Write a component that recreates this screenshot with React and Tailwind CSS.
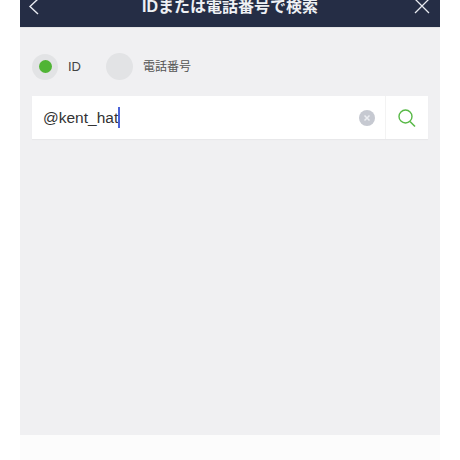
import React from 'react';

function App() {
  return (
    <div className="w-[460px] h-[460px] bg-white overflow-hidden px-[20px] font-['Liberation_Sans','Noto_Sans_CJK_JP',sans-serif]">
      <div className="w-[420px] h-[460px] flex flex-col">

        {/* Header */}
        <div className="h-[27px] shrink-0 bg-[#252d45] flex items-end justify-between pb-[11px] relative overflow-hidden">
          <svg width="14" height="18" viewBox="0 0 14 18" fill="none" className="ml-[7px]">
            <path d="M11 1 L3 8.5 L11 16" stroke="#e8eaf0" strokeWidth="1.4" />
          </svg>
          <p className="absolute left-0 right-0 top-[-3px] text-center text-[16px] leading-[20px] font-bold text-[#eef0f4]">IDまたは電話番号で検索</p>
          <svg width="18" height="18" viewBox="0 0 18 18" fill="none" className="mr-[9px] mb-[1px]">
            <path d="M2 2 L16 16 M16 2 L2 16" stroke="#e8eaf0" strokeWidth="1.3" />
          </svg>
        </div>

        {/* Body */}
        <div className="h-[408px] shrink-0 bg-[#f0f0f2] border-t border-[#e4e4e6] px-[12px] pt-[25px]">

          {/* Radio options */}
          <div className="flex items-center h-[27px]">
            <div className="w-[26px] h-[26px] rounded-full bg-[#e2e3e5] flex items-center justify-center">
              <div className="w-[13px] h-[13px] rounded-full bg-[#50b435]" />
            </div>
            <span className="ml-[10px] text-[13px] text-[#444]">ID</span>
            <div className="ml-[25px] w-[27px] h-[27px] rounded-full bg-[#e2e3e5]" />
            <span className="ml-[10px] text-[12px] text-[#555]">電話番号</span>
          </div>

          {/* Search field */}
          <div className="mt-[16px] h-[43px] bg-white flex items-center shadow-[0_1px_1px_rgba(0,0,0,0.03)]">
            <div className="flex-1 pl-[11px] flex items-center">
              <span className="text-[15.5px] text-[#333]">@kent_hat</span>
              <div className="w-[2px] h-[21px] bg-[#4a63d8]" />
            </div>
            <svg width="16" height="16" viewBox="0 0 16 16" className="mr-[10px]">
              <circle cx="8" cy="8" r="8" fill="#c6c9d1" />
              <path d="M5.5 5.5 L10.5 10.5 M10.5 5.5 L5.5 10.5" stroke="#eceef2" strokeWidth="1.5" />
            </svg>
            <div className="w-[43px] h-[43px] border-l border-[#f3f3f3] flex items-center justify-center">
              <svg width="20" height="20" viewBox="0 0 20 20" fill="none">
                <circle cx="8.5" cy="8.5" r="6.5" stroke="#58b947" strokeWidth="1.4" />
                <path d="M13 13.5 L18 18.5" stroke="#58b947" strokeWidth="1.6" />
              </svg>
            </div>
          </div>
        </div>

        {/* Bottom strip */}
        <div className="flex-1 bg-[#fcfcfc]" />
      </div>
    </div>
  );
}

export default App;
